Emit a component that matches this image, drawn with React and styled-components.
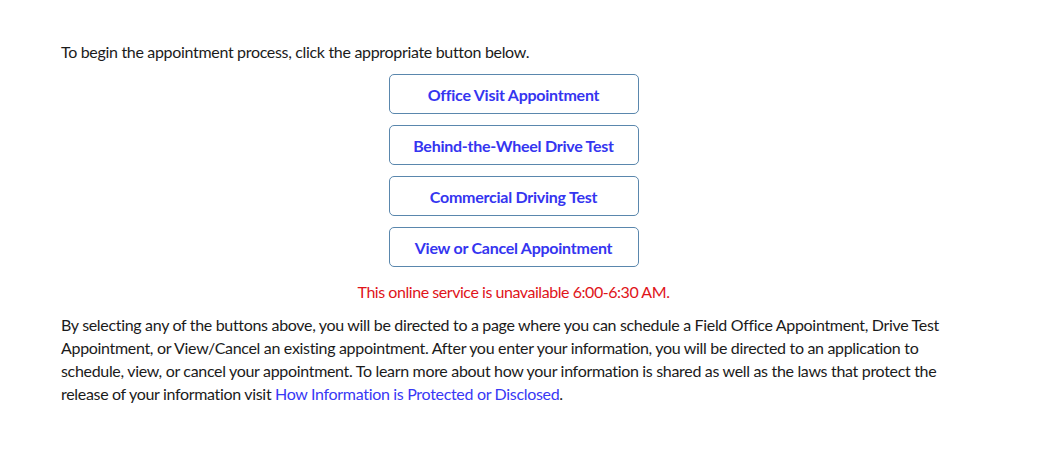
import React from 'react';
import styled, {createGlobalStyle} from 'styled-components';

const GlobalStyle = createGlobalStyle`
  body {
    margin: 0;
    background: #ffffff;
    font-family: Lato, "Liberation Sans", sans-serif;
    color: #1b1b1b;
  }
`;

const Page = styled.div`
  width: 905px;
  padding: 40px 0 0 61px;
  font-size: 16px;
  line-height: 23px;
  letter-spacing: -0.32px;
`;

const Intro = styled.p`
  margin: 0 0 11px;
`;

const ButtonStack = styled.div`
  display: flex;
  flex-direction: column;
  align-items: center;
  gap: 11px;
`;

const ActionButton = styled.button`
  width: 250px;
  height: 40px;
  background: #ffffff;
  border: 1px solid #5a87ad;
  border-radius: 5px;
  color: #3535f0;
  font-family: inherit;
  font-size: 16px;
  font-weight: 700;
  letter-spacing: -0.25px;
  cursor: pointer;
`;

const Notice = styled.p`
  margin: 13px 0 10px;
  text-align: center;
  color: #e0141a;
  letter-spacing: -0.45px;
`;

const Details = styled.p`
  margin: 0;
`;

const Link = styled.a`
  color: #3838f5;
  text-decoration: none;
`;

const buttons = [
  'Office Visit Appointment',
  'Behind-the-Wheel Drive Test',
  'Commercial Driving Test',
  'View or Cancel Appointment'
];

export default function App() {
  return (
    <>
      <GlobalStyle />
      <Page>
        <Intro>To begin the appointment process, click the appropriate button below.</Intro>
        <ButtonStack>
          {buttons.map(label => (
            <ActionButton key={label} type="button">{label}</ActionButton>
          ))}
        </ButtonStack>
        <Notice>This online service is unavailable 6:00-6:30 AM.</Notice>
        <Details>
          By selecting any of the buttons above, you will be directed to a page where you can schedule a Field Office
          Appointment, Drive Test Appointment, or View/Cancel an existing appointment. After you enter your
          information, you will be directed to an application to schedule, view, or cancel your appointment. To learn
          more about how your information is shared as well as the laws that protect the release of your information
          visit <Link href="#">How Information is Protected or Disclosed</Link>.
        </Details>
      </Page>
    </>
  );
}
